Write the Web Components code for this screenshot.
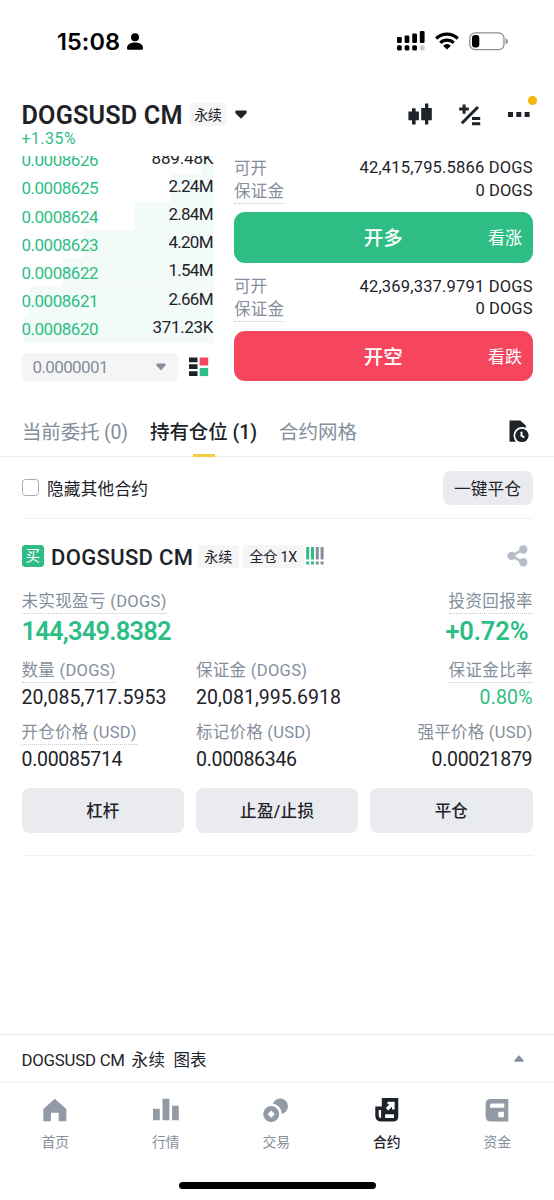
<!DOCTYPE html>
<html lang="zh-CN">
<head>
<meta charset="utf-8">
<title>DOGSUSD CM 永续</title>
<style>
html,body{margin:0;padding:0;background:#fff}
body{width:554px;height:1200px;overflow:hidden;color:#1e2329;font-family:Roboto,"Noto Sans CJK SC",sans-serif}
</style>
</head>
<body>
<trade-app></trade-app>
<script>
const GREEN = '#2ebd85', RED = '#f6465d', GRAY = '#848e9c', INK = '#1e2329';

/* Single line of text. s: size, w: target width, c: colour, f: weight, h: line box, y: top inset, dot: dotted underline */
class UiText extends HTMLElement {
  connectedCallback() {
    const a = (n, d) => this.getAttribute(n) || d;
    const r = this.attachShadow({ mode: 'open' });
    const dot = this.hasAttribute('dot');
    r.innerHTML = `<style>
      :host{display:block;flex:none;white-space:pre;width:max-content;font-size:${a('s', 16.5)}px;
        font-weight:${a('f', 400)};color:${a('c', INK)};line-height:${a('h', 22)}px;height:${a('h', 22)}px;
        ${a('ff', '') ? `font-family:${a('ff', '')},"Noto Sans CJK SC",sans-serif;` : ''}}
      .t{display:block;width:max-content;box-sizing:border-box;padding-top:${a('y', 0)}px}
      .t.dot{height:${+a('h', 22) + 3}px;border-bottom:1.5px dotted #c4c9d1}
    </style><span class="t${dot ? ' dot' : ''}"><slot></slot></span>`;
    const t = r.querySelector('.t'), w = +a('w', 0), n = this.textContent.length;
    if (w && n > 1) {
      const ls = (w - t.getBoundingClientRect().width) / (n - 1);
      t.style.letterSpacing = ls + 'px';
      t.style.width = w + 'px';
      this.style.width = w + 'px';
    }
  }
}

const ICONS = {
  person: [16, 17, `<circle cx="8" cy="4.200" r="4"/><path d="M0 15.200C0 11.700 3.200 9.600 8 9.600s8 2.100 8 5.600c0 1-.6 1.500-1.600 1.500H1.600C.6 16.700 0 16.200 0 15.200z"/>`],
  signal: [28, 20, `<g><rect y="6" width="4.800" height="6" rx="1.300"/><rect x="7.600" y="4.500" width="4.800" height="7.500" rx="1.300"/><rect x="15.200" y="2.500" width="4.800" height="9.500" rx="1.300"/><rect x="22.800" width="4.800" height="12" rx="1.300"/><rect y="14.200" width="4.800" height="5.200" rx="1.500"/><rect x="7.600" y="14.200" width="4.800" height="5.200" rx="1.500"/><rect x="15.200" y="14.200" width="4.800" height="5.200" rx="1.500"/><rect x="22.800" y="14.200" width="4.800" height="5.200" rx="1.500" fill="#ccc"/></g>`],
  wifi: [24, 18, `<g fill="none" stroke="#000" stroke-width="3.200"><path d="M1.200 6.500a15.400 15.400 0 0 1 21.600 0"/><path d="M5.300 10.900a9.600 9.600 0 0 1 13.400 0"/></g><path d="M12 17.600l-3.900-3.900a5.600 5.600 0 0 1 7.800 0z"/>`],
  battery: [40, 19, `<rect x=".8" y=".8" width="34.200" height="16.900" rx="5.300" fill="#fff" stroke="#8e8e8e" stroke-width="1.300"/><rect x="3" y="3" width="7.300" height="12.500" rx="3"/><path d="M36.600 6.300c1.400.5 2.300 1.600 2.300 3s-.9 2.500-2.300 3z" fill="#8e8e8e"/>`],
  down: [12, 9, `<path d="M1.300.5h9.400q1 0 1 1.300v1.100L6 8.700.3 2.900V1.800Q.3.500 1.300.5z"/>`],
  down2: [10, 8, `<path d="M.8.500h8.400l.5 1.800L5 7.500.3 2.300z"/>`],
  up: [10, 7, `<path d="M5 .2l4.500 5v1.600H.5V5.200z"/>`],
  candles: [24, 23, `<path d="M4 5.300h3.600v3.300h3.300v8.600H7.600v4.300H4v-4.300H.4V8.600H4zM17 .6h3.300v4.300h3.500V17.300h-3.500v4.300H17v-4.300h-3.800V4.900H17z"/>`],
  pct: [22, 22, `<path d="M3.600.4h3v3.200h3.200v3h-3.200v3.200h-3V6.600H.2v-3h3.400zM13 13h8.200v2.900H13zM13 18.300h8.200v2.900H13z"/><path d="M2.800 19.200L19 3" stroke="currentColor" stroke-width="3" fill="none"/>`],
  dots: [22, 5, `<path d="M0 0h5v5H0zM8.300 0h5v5h-5zM16.600 0h5v5h-5z"/>`],
  book: [20, 20, `<path d="M0 .5h8.500v4.800H0zM0 7.300h8.500v4.800H0zM0 14.300h8.500v4.800H0z"/><path fill="#f6465d" d="M10.700.5h8.500v8h-8.500z"/><path fill="#2ebd85" d="M10.700 10.900h8.500v8.200h-8.500z"/>`],
  history: [20, 23, `<path d="M.5.500h10.800L16.800 5.500v8H6.500v8.200H.5z"/><circle cx="12.900" cy="15.400" r="8.400" fill="#fff"/><circle cx="12.900" cy="15.400" r="6.700"/><path d="M12.500 11.700v4l2.800 1.800" fill="none" stroke="#fff" stroke-width="2"/>`],
  level: [18, 18, `<g fill="#2ebd85"><path d="M.2 0h3v12.500h-3zM.2 14.500h3v3h-3zM5 0h3v12.500H5zM5 14.500h3v3H5z"/></g><g fill="#848e9c"><path d="M9.800 0h3v12.500h-3zM9.800 14.500h3v3h-3zM14.600 0h3v12.500h-3zM14.600 14.500h3v3h-3z"/></g>`],
  share: [22, 22, `<path d="M16.200 4.400L4.500 10.900l11.700 6.500" fill="none" stroke="currentColor" stroke-width="2.600"/><circle cx="16.300" cy="4.500" r="4.200"/><circle cx="4.500" cy="10.900" r="4.200"/><circle cx="16.300" cy="17.300" r="4.200"/>`],
  home: [24, 24, `<path d="M11.800.8L23.400 11v12.200h-7.700v-8.500H7.900v8.500H.3V11z"/>`],
  bars: [26, 24, `<path d="M0 10.700h6.800v11.600H0zM9.500.8h6.900v21.500H9.500zM19.100 7.800h6.700v14.500h-6.700z"/>`],
  trade: [26, 24, `<circle cx="17.200" cy="8.300" r="7.800"/><circle cx="8.400" cy="15.900" r="10.300" fill="#fff"/><circle cx="8.200" cy="16.100" r="8"/><path d="M8.200 12.400l3.600 3.700-3.600 3.700-3.600-3.700z" fill="#fff"/>`],
  futures: [24, 24, `<path fill-rule="evenodd" d="M6.800 0h16.500v18.300q0 5.200-5.200 5.200H6Q.3 23.500.3 17.800V8.500h6.500zM3.700 12v5.500q0 2.500 2.400 2.500V12zM10.100 16.200V20h8.800v-3.800zM12.500 3.700v2.600h2.100l-3.800 3.800 2.400 2.400L17 8.700v2.800h2.600V3.700z"/>`],
  wallet: [24, 24, `<path fill-rule="evenodd" d="M6 1h17.300v22.500H6Q.6 23.500.6 18V6.400Q.6 1 6 1zM6.700 5.500Q5 5.500 5 7.400v2.300h14.300V5.500zM13.300 13.700v5.500h5.600v-5.500z"/>`]
};
class UiIcon extends HTMLElement {
  connectedCallback() {
    const [w, h, body] = ICONS[this.getAttribute('name')];
    this.attachShadow({ mode: 'open' }).innerHTML = `<style>
      :host{display:block;flex:none;width:${w}px;height:${h}px;color:${this.getAttribute('c') || INK}}
      svg{display:block;overflow:visible}</style>
      <svg width="${w}" height="${h}" viewBox="0 0 ${w} ${h}" fill="currentColor">${body}</svg>`;
  }
}

const define = (name, css, html) => customElements.define(name, class extends HTMLElement {
  connectedCallback() {
    const t = document.createElement('template');
    t.innerHTML = `<style>*{box-sizing:border-box}${css}</style>${typeof html === 'function' ? html(this) : html}`;
    this.attachShadow({ mode: 'open' }).appendChild(t.content.cloneNode(true));
  }
});
customElements.define('ui-text', UiText);
customElements.define('ui-icon', UiIcon);

define('ui-tag', `:host{display:flex;flex:none;align-items:center;justify-content:center;height:23px;background:#f5f5f6;border-radius:3px}`, `<slot></slot>`);

define('status-bar', `:host{display:flex;align-items:flex-start;height:84px;padding:0 45px 0 57px}
  .t{margin-top:27px}.p{margin:33px auto 0 7px}.s{margin-top:31px}.w{margin:32px 10px 0}.b{margin-top:32px}`, `
  <ui-text class="t" s="23.500" f="600" w="63" h="30" c="#000" ff="Inter">15:08</ui-text>
  <ui-icon class="p" name="person" c="#000"></ui-icon>
  <ui-icon class="s" name="signal" c="#000"></ui-icon>
  <ui-icon class="w" name="wifi" c="#000"></ui-icon>
  <ui-icon class="b" name="battery" c="#000"></ui-icon>`);

define('pair-header', `:host{display:block;height:72px;padding:16px 24px 0 21.500px}
  .r{display:flex;align-items:center;height:29px}
  ui-tag{width:36px;margin:0 8.500px 0 7.500px}
  .sp{flex:1}.a{margin-right:27px}.m{position:relative}
  .n{position:absolute;right:-7px;top:-16px;width:8.600px;height:8.600px;border-radius:50%;background:#f0b90b}`, `
  <div class="r"><ui-text y="1" s="25.200" f="600" w="161" h="30">DOGSUSD CM</ui-text>
  <ui-tag><ui-text s="14" w="27.500" h="20">永续</ui-text></ui-tag><ui-icon name="down"></ui-icon><span class="sp"></span>
  <ui-icon class="a" name="candles"></ui-icon><ui-icon class="a" name="pct"></ui-icon>
  <div class="m"><ui-icon name="dots"></ui-icon><i class="n"></i></div></div>
  <ui-text s="15.800" w="54" h="20" c="${GREEN}">+1.35%</ui-text>`);

const BOOK = [['0.0008626', '889.48K', 201, 62], ['0.0008625', '2.24M', 171, 45], ['0.0008624', '2.84M', 135, 45], ['0.0008623', '4.20M', 83, 45],
  ['0.0008622', '1.54M', 63, 45], ['0.0008621', '2.66M', 29, 45], ['0.0008620', '371.23K', 24, 61]];
define('book-row', `:host{display:flex;justify-content:space-between;height:28.100px;background:linear-gradient(#f2fbf7,#f2fbf7) right/var(--d) 100% no-repeat}
  .p{margin-top:3.300px}.q{margin-top:1px}`, e => {
  const [p, q, x, w] = BOOK[+e.getAttribute('i')];
  e.style.setProperty('--d', (213.5 - x) + 'px');
  return `<ui-text class="p" s="17" w="77" h="22" c="${GREEN}">${p}</ui-text><ui-text class="q" s="17" w="${w}" h="22">${q}</ui-text>`;
});
define('order-book', `:host{display:block;width:192px;flex:none}
  .list{height:186.700px;overflow:hidden;display:flex;flex-direction:column;justify-content:flex-end}
  book-row{flex:none}
  .f{display:flex;align-items:center;margin-top:10px;height:28px}
  .s{width:156.500px;height:28px;border-radius:5px;background:#f5f5f5;display:flex;align-items:center;justify-content:space-between;padding:0 12px 0 11px;margin-right:11px}`, `
  <div class="list">${BOOK.map((_, i) => `<book-row i="${i}"></book-row>`).join('')}</div>
  <div class="f"><div class="s"><ui-text s="17" w="76" c="${GRAY}">0.0000001</ui-text><ui-icon name="down2" c="${GRAY}"></ui-icon></div><ui-icon name="book"></ui-icon></div>`);

define('order-side', `:host{display:block;height:118.500px}
  .r{display:flex;justify-content:space-between;height:22.500px}
  .b{display:grid;grid-template-columns:1fr auto 1fr;align-items:center;height:50.500px;margin-top:11px;border-radius:11px;padding-right:10.500px;padding-left:10.500px}
  .b :last-child{justify-self:end}`, e => {
  const g = k => e.getAttribute(k);
  return `<div class="r"><ui-text y="1.500" s="16.500" w="33" c="${GRAY}">可开</ui-text><ui-text y="1" s="16.500" w="173">${g('max')} DOGS</ui-text></div>
  <div class="r"><ui-text dot y="2" s="16.500" w="50" c="${GRAY}">保证金</ui-text><ui-text y="1" s="16.500" w="57">0 DOGS</ui-text></div>
  <div class="b" style="background:${g('bg')}"><span></span><ui-text y="2" s="19.500" f="500" w="39" h="28" c="#fff">${g('a')}</ui-text><ui-text y="1" s="17" w="34" h="24" c="#fff">${g('b')}</ui-text></div>`;
});
define('trade-panel', `:host{display:flex;justify-content:space-between;height:244px;padding:0 21.500px 0 21.500px}
  .o{width:298.500px}`, `
  <order-book></order-book>
  <div class="o"><order-side max="42,415,795.5866" bg="${GREEN}" a="开多" b="看涨"></order-side>
  <order-side max="42,369,337.9791" bg="${RED}" a="开空" b="看跌"></order-side></div>`);

define('order-tabs', `:host{display:flex;height:57px;border-bottom:1.500px solid #ebecef;padding:17px 25px 0 22px}
  .t{margin-right:22px;position:relative}
  .u{position:absolute;left:43px;bottom:-1px;width:21.500px;height:3.500px;background:#f0cf3e}
  ui-icon{margin:2.500px 0 0 auto}`, `
  <div class="t"><ui-text y="1" s="19.500" w="106" h="30" c="${GRAY}">当前委托 (0)</ui-text></div>
  <div class="t"><ui-text y="1" s="19.500" f="500" w="107" h="30">持有仓位 (1)</ui-text><i class="u"></i></div>
  <div class="t"><ui-text y="1" s="19.500" w="78" h="30" c="${GRAY}">合约网格</ui-text></div>
  <ui-icon name="history"></ui-icon>`);

define('filter-row', `:host{display:flex;align-items:center;height:62px;margin:0 21.500px;border-bottom:1.500px solid #efeff2}
  .c{width:17px;height:17px;border:1.500px solid #a5abb6;border-radius:3.500px;margin-right:8.500px}
  .b{display:flex;align-items:center;justify-content:center;width:90px;height:34px;border-radius:8px;background:#eaebef;margin-left:auto}`, `
  <i class="c"></i><ui-text y="2" s="16.700" w="101" h="24">隐藏其他合约</ui-text><div class="b"><ui-text y="2" s="16.700" w="67" h="24">一键平仓</ui-text></div>`);

define('position-head', `:host{display:flex;align-items:center;height:24px}
  .buy{display:flex;align-items:center;justify-content:center;width:22.500px;height:22.500px;border-radius:3px;background:${GREEN};margin-right:7px}
  .a{width:41.500px;margin:0 3.500px 0 4.500px}.b{width:61.500px;margin-right:1.500px}
  .s{margin:0 3.500px 0 auto}`, `
  <div class="buy"><ui-text y="1" s="14.500" h="20" c="#fff">买</ui-text></div><ui-text y="2" s="22" f="500" w="142" h="26">DOGSUSD CM</ui-text>
  <ui-tag class="a"><ui-text y="1" s="14" w="28" h="20">永续</ui-text></ui-tag><ui-tag class="b"><ui-text y="1" s="14.300" w="48" h="20">全仓 1X</ui-text></ui-tag>
  <ui-icon name="level"></ui-icon><ui-icon class="s" name="share" c="#b7bdc6"></ui-icon>`);

const val = (t, w, c = INK, s = 19.5) => `<ui-text y="2" s="${s}" w="${w}" h="26" c="${c}">${t}</ui-text>`;
const lab = (t, w, dot = 1) => `<ui-text ${dot ? 'dot' : ''} y="2" s="16.500" w="${w}" h="22" c="${GRAY}">${t}</ui-text>`;
define('stat-cell', `:host{display:flex;flex-direction:column;align-items:flex-start;gap:var(--gap,3.500px)}:host([end]){align-items:flex-end}`, `<slot></slot>`);
define('position-card', `:host{display:block;height:337px;margin:0 21.500px;padding-top:25px;border-bottom:1.500px solid #f0f1f3}
  .g{display:grid;grid-template-columns:174.500px 174.500px 1fr;height:62px}
  .h{display:flex;justify-content:space-between;height:68.500px;margin-top:21px;--gap:5px}
  .b{display:grid;grid-template-columns:repeat(3,1fr);gap:11.500px;margin-top:6.500px}
  .b div{height:44.500px;border-radius:8px;background:#eaebef;display:flex;align-items:center;justify-content:center}`, `
  <position-head></position-head>
  <div class="h"><stat-cell>${lab('未实现盈亏 (DOGS)', 145)}<ui-text s="25.500" f="600" w="150" h="30" c="${GREEN}">144,349.8382</ui-text></stat-cell>
  <stat-cell end>${lab('投资回报率', 84)}<ui-text style="margin-right:4px" s="25.500" f="600" w="83" h="30" c="${GREEN}">+0.72%</ui-text></stat-cell></div>
  <div class="g"><stat-cell>${lab('数量 (DOGS)', 94)}${val('20,085,717.5953', 145)}</stat-cell>
  <stat-cell>${lab('保证金 (DOGS)', 111, 0)}${val('20,081,995.6918', 145)}</stat-cell>
  <stat-cell end>${lab('保证金比率', 84)}${val('0.80%', 53, GREEN)}</stat-cell></div>
  <div class="g"><stat-cell>${lab('开仓价格 (USD)', 115)}${val('0.00085714', 101)}</stat-cell>
  <stat-cell>${lab('标记价格 (USD)', 115, 0)}${val('0.00086346', 101)}</stat-cell>
  <stat-cell end>${lab('强平价格 (USD)', 115, 0)}${val('0.00021879', 101)}</stat-cell></div>
  <div class="b"><div><ui-text y="2" f="500" w="33">杠杆</ui-text></div><div><ui-text y="2" f="500" w="74">止盈/止损</ui-text></div><div><ui-text y="2" f="500" w="33">平仓</ui-text></div></div>`);

define('chart-bar', `:host{display:flex;align-items:center;justify-content:space-between;height:49px;margin-top:auto;border-top:1.500px solid #e8e9ec;border-bottom:1px solid #f0f0f2;padding:1px 30.500px 0 21.500px}
  .l{display:flex}.l>*{margin-right:6.500px}`, `
  <div class="l"><ui-text s="16.800" w="103.500" y="1">DOGSUSD CM</ui-text><ui-text y="2" w="33.500" style="margin-right:8.500px">永续</ui-text><ui-text y="2" w="33">图表</ui-text></div>
  <ui-icon name="up" c="${GRAY}" style="margin-top:-2px"></ui-icon>`);

define('nav-item', `:host{display:flex;flex-direction:column;align-items:center}ui-text{margin-top:8px}`, e => {
  const c = e.hasAttribute('on') ? INK : '#929aa5';
  return `<ui-icon name="${e.getAttribute('icon')}" c="${c}"></ui-icon><ui-text y="1" s="13.800" w="27.500" h="22" c="${e.hasAttribute('on') ? INK : GRAY}" f="${e.hasAttribute('on') ? 500 : 400}">${e.textContent}</ui-text>`;
});
define('bottom-nav', `:host{display:block;height:117px}
  .n{display:grid;grid-template-columns:repeat(5,110.500px);padding-top:14.500px;height:98.500px}
  .i{width:197px;height:7px;border-radius:4px;background:#000;margin:0 auto}`, `
  <div class="n"><nav-item icon="home">首页</nav-item><nav-item icon="bars">行情</nav-item><nav-item icon="trade">交易</nav-item><nav-item icon="futures" on>合约</nav-item><nav-item icon="wallet">资金</nav-item></div>
  <div class="i"></div>`);

define('trade-app', `:host{display:flex;flex-direction:column;width:554px;height:1200px;background:#fff}:host>*{flex:none}`, `
  <status-bar></status-bar><pair-header></pair-header><trade-panel></trade-panel><order-tabs></order-tabs>
  <filter-row></filter-row><position-card></position-card><chart-bar></chart-bar><bottom-nav></bottom-nav>`);
</script>
</body>
</html>
